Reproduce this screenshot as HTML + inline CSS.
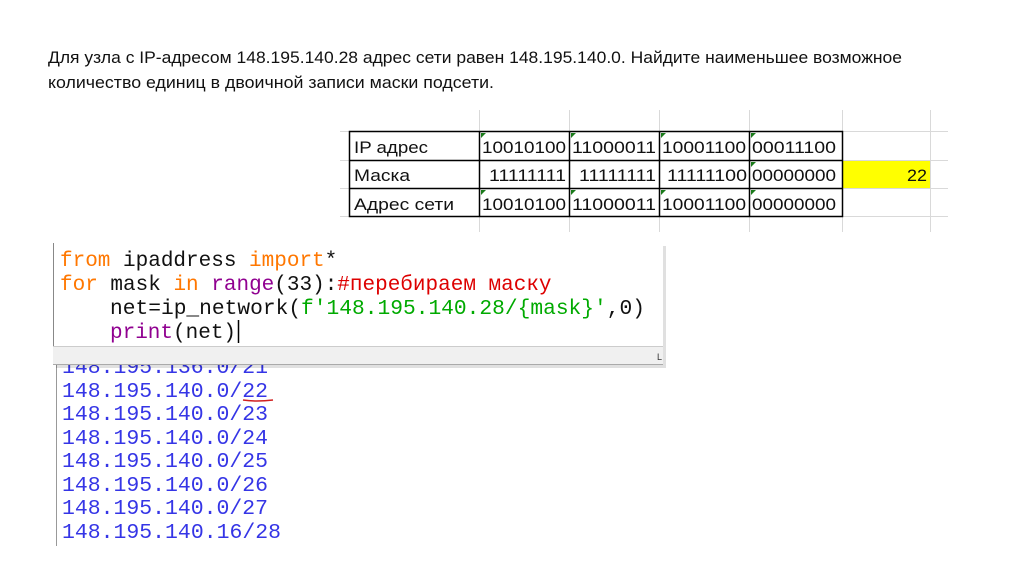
<!DOCTYPE html>
<html><head><meta charset="utf-8"><style>
html,body{margin:0;padding:0;background:#fff;}
svg{display:block}
</style></head><body>
<svg width="1024" height="574" xmlns="http://www.w3.org/2000/svg">
<rect width="1024" height="574" fill="#fff"/>
<g font-family="Liberation Sans, sans-serif" font-size="17" fill="#111">
<text x="48" y="63" textLength="854" lengthAdjust="spacingAndGlyphs">Для узла с IP-адресом 148.195.140.28 адрес сети равен 148.195.140.0. Найдите наименьшее возможное</text>
<text x="48" y="88" textLength="446" lengthAdjust="spacingAndGlyphs">количество единиц в двоичной записи маски подсети.</text>
</g>
<g stroke="#d9d9d9" stroke-width="1">
<line x1="479.5" y1="110" x2="479.5" y2="232"/><line x1="569.5" y1="110" x2="569.5" y2="232"/>
<line x1="659.5" y1="110" x2="659.5" y2="232"/><line x1="749.5" y1="110" x2="749.5" y2="232"/>
<line x1="842.5" y1="110" x2="842.5" y2="232"/><line x1="930.5" y1="110" x2="930.5" y2="232"/>
<line x1="340" y1="131.5" x2="948" y2="131.5"/><line x1="340" y1="160.5" x2="948" y2="160.5"/>
<line x1="340" y1="188.5" x2="948" y2="188.5"/><line x1="340" y1="216.5" x2="948" y2="216.5"/>
</g>
<rect x="843" y="161" width="87" height="27" fill="#ffff00"/>
<g stroke="#000" stroke-width="1.5" fill="none">
<rect x="349.5" y="131.5" width="493" height="85"/>
<line x1="479.5" y1="131" x2="479.5" y2="217"/><line x1="569.5" y1="131" x2="569.5" y2="217"/>
<line x1="659.5" y1="131" x2="659.5" y2="217"/><line x1="749.5" y1="131" x2="749.5" y2="217"/>
<line x1="349" y1="160.5" x2="843" y2="160.5"/><line x1="349" y1="188.5" x2="843" y2="188.5"/>
</g>
<g fill="#1a7a1a">
<path d="M481 133h5l-5 5z"/><path d="M571 133h5l-5 5z"/><path d="M661 133h5l-5 5z"/><path d="M751 133h5l-5 5z"/>
<path d="M751 162h5l-5 5z"/>
<path d="M481 190h5l-5 5z"/><path d="M571 190h5l-5 5z"/><path d="M661 190h5l-5 5z"/><path d="M751 190h5l-5 5z"/>
</g>
<g font-family="Liberation Sans, sans-serif" font-size="17" fill="#111">
<text x="354" y="153" textLength="74" lengthAdjust="spacingAndGlyphs">IP адрес</text>
<text x="354" y="181" textLength="56" lengthAdjust="spacingAndGlyphs">Маска</text>
<text x="354" y="210" textLength="100" lengthAdjust="spacingAndGlyphs">Адрес сети</text>
<text x="482" y="153" textLength="84" lengthAdjust="spacingAndGlyphs">10010100</text>
<text x="572" y="153" textLength="84" lengthAdjust="spacingAndGlyphs">11000011</text>
<text x="662" y="153" textLength="84" lengthAdjust="spacingAndGlyphs">10001100</text>
<text x="752" y="153" textLength="84" lengthAdjust="spacingAndGlyphs">00011100</text>
<text x="489" y="181" textLength="77" lengthAdjust="spacingAndGlyphs">11111111</text>
<text x="579" y="181" textLength="77" lengthAdjust="spacingAndGlyphs">11111111</text>
<text x="667" y="181" textLength="80" lengthAdjust="spacingAndGlyphs">11111100</text>
<text x="752" y="181" textLength="84" lengthAdjust="spacingAndGlyphs">00000000</text>
<text x="907" y="181" textLength="20" lengthAdjust="spacingAndGlyphs">22</text>
<text x="482" y="210" textLength="84" lengthAdjust="spacingAndGlyphs">10010100</text>
<text x="572" y="210" textLength="84" lengthAdjust="spacingAndGlyphs">11000011</text>
<text x="662" y="210" textLength="84" lengthAdjust="spacingAndGlyphs">10001100</text>
<text x="752" y="210" textLength="84" lengthAdjust="spacingAndGlyphs">00000000</text>
</g>
<line x1="56.5" y1="362" x2="56.5" y2="546" stroke="#999"/>
<g font-family="Liberation Mono, monospace" font-size="21" fill="#3535e6">
<text x="62" y="373" textLength="206" lengthAdjust="spacingAndGlyphs">148.195.136.0/21</text>
<text x="62" y="397" textLength="206" lengthAdjust="spacingAndGlyphs">148.195.140.0/22</text>
<text x="62" y="420" textLength="206" lengthAdjust="spacingAndGlyphs">148.195.140.0/23</text>
<text x="62" y="444" textLength="206" lengthAdjust="spacingAndGlyphs">148.195.140.0/24</text>
<text x="62" y="467" textLength="206" lengthAdjust="spacingAndGlyphs">148.195.140.0/25</text>
<text x="62" y="491" textLength="206" lengthAdjust="spacingAndGlyphs">148.195.140.0/26</text>
<text x="62" y="514" textLength="206" lengthAdjust="spacingAndGlyphs">148.195.140.0/27</text>
<text x="62" y="538" textLength="219" lengthAdjust="spacingAndGlyphs">148.195.140.16/28</text>
</g>
<path d="M243 400 Q256 402 273 400" stroke="#d02020" stroke-width="1.5" fill="none"/>
<rect x="56" y="246" width="610" height="122" fill="#000" opacity="0.12"/>
<rect x="53" y="243" width="610" height="122" fill="#fff"/>
<line x1="53.5" y1="243" x2="53.5" y2="365" stroke="#888"/>
<rect x="53" y="346" width="610" height="19" fill="#f0f0f0"/>
<line x1="53" y1="346.5" x2="663" y2="346.5" stroke="#ccc"/>
<line x1="53" y1="364.5" x2="663" y2="364.5" stroke="#aaa"/>
<text x="657" y="360" font-family="Liberation Sans, sans-serif" font-size="9" fill="#333">L</text>
<g font-family="Liberation Mono, monospace" font-size="21" xml:space="preserve">
<text x="60" y="266"><tspan fill="#ff7700">from</tspan><tspan fill="#111"> ipaddress </tspan><tspan fill="#ff7700">import</tspan><tspan fill="#111">*</tspan></text>
<text x="60" y="290"><tspan fill="#ff7700">for</tspan><tspan fill="#111"> mask </tspan><tspan fill="#ff7700">in</tspan><tspan fill="#111"> </tspan><tspan fill="#900090">range</tspan><tspan fill="#111">(33):</tspan><tspan fill="#dd0000">#перебираем маску</tspan></text>
<text x="110" y="314" textLength="535" lengthAdjust="spacingAndGlyphs"><tspan fill="#111">net=ip_network(</tspan><tspan fill="#00aa00">f'148.195.140.28/{mask}'</tspan><tspan fill="#111">,0)</tspan></text>
<text x="110" y="338"><tspan fill="#900090">print</tspan><tspan fill="#111">(net)</tspan></text>
</g>
<line x1="238.5" y1="320" x2="238.5" y2="343" stroke="#000" stroke-width="1.5"/>
</svg>
</body></html>
